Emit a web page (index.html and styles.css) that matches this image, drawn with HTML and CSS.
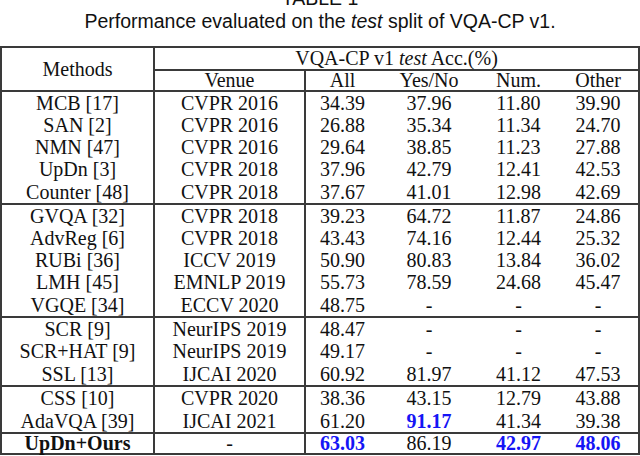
FILE: index.html
```html
<!DOCTYPE html>
<html>
<head>
<meta charset="utf-8">
<link rel="stylesheet" href="styles.css">
</head>
<body>
<div class="caption">
  <div class="cap-line">TABLE 1</div>
  <div class="cap-line">Performance evaluated on the <i>test</i> split of VQA-CP v1.</div>
</div>
<table class="results">
  <colgroup>
    <col class="c-method"><col class="c-venue"><col class="c-all"><col class="c-yn"><col class="c-num"><col class="c-other">
  </colgroup>
  <thead>
    <tr class="h1">
      <th rowspan="2" class="method vline">Methods</th>
      <th colspan="5" class="span-head">VQA-CP v1 <i>test</i> Acc.(%)</th>
    </tr>
    <tr class="h2">
      <th class="vline">Venue</th><th>All</th><th>Yes/No</th><th>Num.</th><th>Other</th>
    </tr>
  </thead>
  <tbody>
    <tr><td class="vline">MCB [17]</td><td class="vline">CVPR 2016</td><td>34.39</td><td>37.96</td><td>11.80</td><td>39.90</td></tr>
    <tr><td class="vline">SAN [2]</td><td class="vline">CVPR 2016</td><td>26.88</td><td>35.34</td><td>11.34</td><td>24.70</td></tr>
    <tr><td class="vline">NMN [47]</td><td class="vline">CVPR 2016</td><td>29.64</td><td>38.85</td><td>11.23</td><td>27.88</td></tr>
    <tr><td class="vline">UpDn [3]</td><td class="vline">CVPR 2018</td><td>37.96</td><td>42.79</td><td>12.41</td><td>42.53</td></tr>
    <tr class="end"><td class="vline">Counter [48]</td><td class="vline">CVPR 2018</td><td>37.67</td><td>41.01</td><td>12.98</td><td>42.69</td></tr>
  </tbody>
  <tbody>
    <tr><td class="vline">GVQA [32]</td><td class="vline">CVPR 2018</td><td>39.23</td><td>64.72</td><td>11.87</td><td>24.86</td></tr>
    <tr><td class="vline">AdvReg [6]</td><td class="vline">CVPR 2018</td><td>43.43</td><td>74.16</td><td>12.44</td><td>25.32</td></tr>
    <tr><td class="vline">RUBi [36]</td><td class="vline">ICCV 2019</td><td>50.90</td><td>80.83</td><td>13.84</td><td>36.02</td></tr>
    <tr><td class="vline">LMH [45]</td><td class="vline">EMNLP 2019</td><td>55.73</td><td>78.59</td><td>24.68</td><td>45.47</td></tr>
    <tr class="end"><td class="vline">VGQE [34]</td><td class="vline">ECCV 2020</td><td>48.75</td><td>-</td><td>-</td><td>-</td></tr>
  </tbody>
  <tbody>
    <tr><td class="vline">SCR [9]</td><td class="vline">NeurIPS 2019</td><td>48.47</td><td>-</td><td>-</td><td>-</td></tr>
    <tr><td class="vline">SCR+HAT [9]</td><td class="vline">NeurIPS 2019</td><td>49.17</td><td>-</td><td>-</td><td>-</td></tr>
    <tr class="end"><td class="vline">SSL [13]</td><td class="vline">IJCAI 2020</td><td>60.92</td><td>81.97</td><td>41.12</td><td>47.53</td></tr>
  </tbody>
  <tbody>
    <tr><td class="vline">CSS [10]</td><td class="vline">CVPR 2020</td><td>38.36</td><td>43.15</td><td>12.79</td><td>43.88</td></tr>
    <tr class="end"><td class="vline">AdaVQA [39]</td><td class="vline">IJCAI 2021</td><td>61.20</td><td class="best">91.17</td><td>41.34</td><td>39.38</td></tr>
  </tbody>
  <tbody>
    <tr class="end ours"><td class="vline ours-name">UpDn+Ours</td><td class="vline">-</td><td class="best">63.03</td><td>86.19</td><td class="best">42.97</td><td class="best">48.06</td></tr>
  </tbody>
</table>
</body>
</html>
```

FILE: styles.css
```css
html, body {
  margin: 0;
  padding: 0;
  background: #ffffff;
}
body {
  width: 640px;
  height: 456px;
  overflow: hidden;
}
.caption {
  margin-top: -13px;
  font-family: "Liberation Sans", Arial, sans-serif;
  font-size: 19.5px;
  line-height: 23px;
  text-align: center;
  color: #111;
}
.results {
  margin-top: 13px;
  width: 638px;
  table-layout: fixed;
  border-collapse: collapse;
  font-family: "Liberation Serif", "Times New Roman", serif;
  font-size: 20px;
  color: #111;
  border-top: 2px solid #3a3a3a;
  border-left: 2px solid #3a3a3a;
  border-right: 2px solid #3a3a3a;
}
.c-method { width: 153px; }
.c-venue { width: 151px; }
.c-all { width: 74px; }
.c-yn { width: 100px; }
.c-num { width: 79px; }
.c-other { width: 81px; }
.results th, .results td {
  padding: 0;
  text-align: center;
  font-weight: normal;
  white-space: nowrap;
}
.results td {
  height: 22px;
  line-height: 22px;
}
.results tr.end td {
  height: 23px;
  border-bottom: 2px solid #3a3a3a;
}
.results .h1 th {
  height: 21px;
  line-height: 21px;
}
.results .h2 th {
  height: 19px;
  line-height: 19px;
  border-bottom: 2px solid #3a3a3a;
}
.results .h1 th.method {
  line-height: 40px;
}
.span-head {
  border-bottom: 2px solid #3a3a3a;
}
.method {
  border-bottom: 2px solid #3a3a3a;
}
.vline {
  border-right: 2px solid #3a3a3a;
}
.results tr.ours td {
  height: 19px;
  line-height: 19px;
}
.results td.ours-name {
  font-weight: bold;
}
.results td.best {
  color: #1515f5;
  font-weight: bold;
}
```
